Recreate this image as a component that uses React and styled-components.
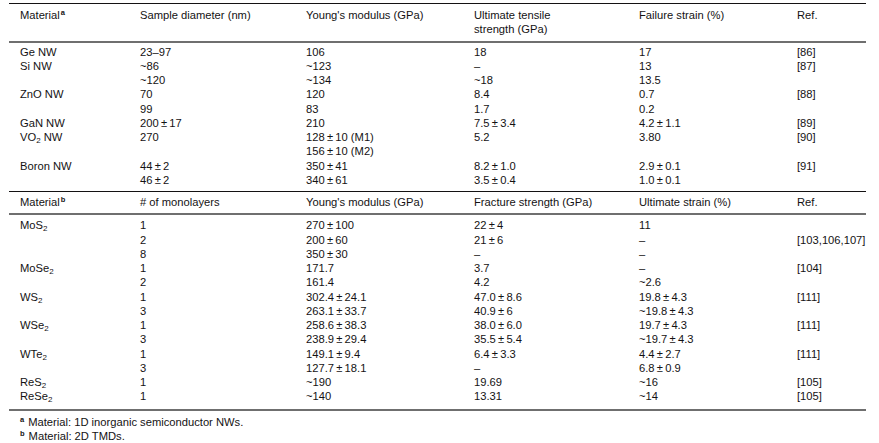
import React from 'react';
import styled, { createGlobalStyle } from 'styled-components';

const GlobalStyle = createGlobalStyle`
  * { margin: 0; padding: 0; box-sizing: border-box; }
  html, body {
    background: #fff;
    width: 100%;
    height: 100%;
    overflow: hidden;
  }
`;

const ink = '#141213';

const Page = styled.div`
  padding: 3px 13px 0 9px;
  font-family: 'Liberation Sans', Arial, sans-serif;
  font-size: 11.2px;
  color: ${ink};
`;

const Table = styled.table`
  width: 857px;
  border-collapse: separate;
  border-spacing: 0;
  table-layout: fixed;
  border-top: 1px solid ${ink};
  border-bottom: 2px solid #6f6f6f;
`;

const Cell = styled.td`
  line-height: 14.25px;
  padding: 0;
  white-space: nowrap;
  vertical-align: top;
  text-align: left;
  font-weight: normal;
  &:first-child { padding-left: 11px; }
`;

const HeadRow = styled.tr`
  & > td {
    border-top: ${p => (p.$ruled ? `1px solid ${ink}` : 'none')};
    border-bottom: 2px solid #6f6f6f;
    padding-top: ${p => p.$top}px;
    padding-bottom: ${p => p.$bottom}px;
  }
`;

const Body = styled.tbody`
  & > tr:first-child > td { padding-top: ${p => p.$top}px; }
  & > tr:last-child > td { padding-bottom: ${p => p.$bottom}px; }
`;

const Sub = styled.sub`
  font-size: 8px;
  vertical-align: -2px;
  line-height: 0;
`;

const Sup = styled.sup`
  font-size: 7.5px;
  font-weight: bold;
  vertical-align: 4px;
  line-height: 0;
  margin-left: 1px;
`;

const Notes = styled.div`
  padding: 4px 0 0 11px;
  line-height: 14.25px;
`;

const Note = styled.p`
  white-space: nowrap;
  & > sup { margin: 0 4px 0 0; }
`;

const pm = (a, b) => `${a}\u2009±\u2009${b}`;
const S = (t, n = 2) => <>{t}<Sub>{n}</Sub></>;

const nwRows = [
  ['Ge NW', '23–97', '106', '18', '17', '[86]'],
  ['Si NW', '~86', '~123', '–', '13', '[87]'],
  ['', '~120', '~134', '~18', '13.5', ''],
  ['ZnO NW', '70', '120', '8.4', '0.7', '[88]'],
  ['', '99', '83', '1.7', '0.2', ''],
  ['GaN NW', pm(200, 17), '210', pm('7.5', '3.4'), pm('4.2', '1.1'), '[89]'],
  [<>{S('VO')} NW</>, '270', pm(128, 10) + ' (M1)', '5.2', '3.80', '[90]'],
  ['', '', pm(156, 10) + ' (M2)', '', '', ''],
  ['Boron NW', pm(44, 2), pm(350, 41), pm('8.2', '1.0'), pm('2.9', '0.1'), '[91]'],
  ['', pm(46, 2), pm(340, 61), pm('3.5', '0.4'), pm('1.0', '0.1'), ''],
];

const tmdRows = [
  [S('MoS'), '1', pm(270, 100), pm(22, 4), '11', ''],
  ['', '2', pm(200, 60), pm(21, 6), '–', '[103,106,107]'],
  ['', '8', pm(350, 30), '–', '–', ''],
  [S('MoSe'), '1', '171.7', '3.7', '–', '[104]'],
  ['', '2', '161.4', '4.2', '~2.6', ''],
  [S('WS'), '1', pm('302.4', '24.1'), pm('47.0', '8.6'), pm('19.8', '4.3'), '[111]'],
  ['', '3', pm('263.1', '33.7'), pm('40.9', '6'), '~' + pm('19.8', '4.3'), ''],
  [S('WSe'), '1', pm('258.6', '38.3'), pm('38.0', '6.0'), pm('19.7', '4.3'), '[111]'],
  ['', '3', pm('238.9', '29.4'), pm('35.5', '5.4'), '~' + pm('19.7', '4.3'), ''],
  [S('WTe'), '1', pm('149.1', '9.4'), pm('6.4', '3.3'), pm('4.4', '2.7'), '[111]'],
  ['', '3', pm('127.7', '18.1'), '–', pm('6.8', '0.9'), ''],
  [S('ReS'), '1', '~190', '19.69', '~16', '[105]'],
  [S('ReSe'), '1', '~140', '13.31', '~14', '[105]'],
];

const widths = [131, 166, 168, 165, 158, 69];

function Rows({ rows }) {
  return rows.map((r, i) => (
    <tr key={i}>
      {r.map((c, j) => <Cell key={j}>{c}</Cell>)}
    </tr>
  ));
}

export default function App() {
  return (
    <>
      <GlobalStyle />
      <Page>
        <Table>
          <colgroup>
            {widths.map((w, i) => <col key={i} style={{ width: w }} />)}
          </colgroup>
          <tbody>
            <HeadRow $top={4} $bottom={4}>
              <Cell>Material<Sup>a</Sup></Cell>
              <Cell>Sample diameter (nm)</Cell>
              <Cell>Young's modulus (GPa)</Cell>
              <Cell>Ultimate tensile<br />strength (GPa)</Cell>
              <Cell>Failure strain (%)</Cell>
              <Cell>Ref.</Cell>
            </HeadRow>
          </tbody>
          <Body $top={2} $bottom={4}>
            <Rows rows={nwRows} />
          </Body>
          <tbody>
            <HeadRow $ruled $top={3} $bottom={4}>
              <Cell>Material<Sup>b</Sup></Cell>
              <Cell># of monolayers</Cell>
              <Cell>Young's modulus (GPa)</Cell>
              <Cell>Fracture strength (GPa)</Cell>
              <Cell>Ultimate strain (%)</Cell>
              <Cell>Ref.</Cell>
            </HeadRow>
          </tbody>
          <Body $top={3} $bottom={5}>
            <Rows rows={tmdRows} />
          </Body>
        </Table>
        <Notes>
          <Note><Sup>a</Sup>Material: 1D inorganic semiconductor NWs.</Note>
          <Note><Sup>b</Sup>Material: 2D TMDs.</Note>
        </Notes>
      </Page>
    </>
  );
}
